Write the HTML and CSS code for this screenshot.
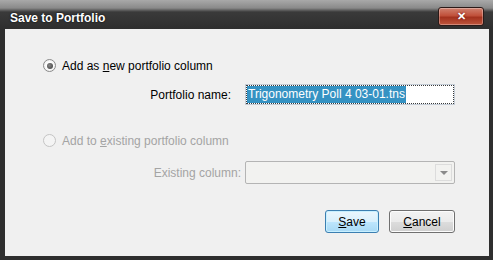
FILE: index.html
```html
<!DOCTYPE html>
<html lang="en">
<head>
    <meta charset="UTF-8">
    <title>Save to Portfolio</title>
    <link rel="stylesheet" href="styles.css">
</head>
<body>
    <div class="window">
        <div class="titlebar">
            <span class="title">Save to Portfolio</span>
            <button class="close">&#x2715;</button>
        </div>
        <div class="client">
            <div class="option">
                <span class="radio checked"></span>
                <span>Add as <u>n</u>ew portfolio column</span>
            </div>
            <div class="field">
                <label>Portfolio name:</label>
                <div class="textbox">
                    <div class="focus"><span class="selected">Trigonometry Poll 4 03-01.tns</span></div>
                </div>
            </div>
            <div class="option disabled">
                <span class="radio"></span>
                <span>Add to <u>e</u>xisting portfolio column</span>
            </div>
            <div class="field disabled">
                <label>Existing column:</label>
                <div class="combo"><span class="arrow"></span></div>
            </div>
            <div class="buttons">
                <button class="btn default"><u>S</u>ave</button>
                <button class="btn"><u>C</u>ancel</button>
            </div>
        </div>
    </div>
</body>
</html>
```

FILE: styles.css
```css
body {
    margin: 0;
    padding: 0;
    font-family: "Liberation Sans", Arial, sans-serif;
    font-size: 12px;
    background-color: #2b2b2b;
}

.window {
    width: 493px;
    height: 260px;
    display: flex;
    flex-direction: column;
    background: linear-gradient(to bottom, #a9a9a9 0px, #8a8a8a 8px, #3a3a3a 12px, #2e2e2e 29px);
    padding: 0 4px 4px 5px;
    box-sizing: border-box;
}

.titlebar {
    height: 29px;
    display: flex;
    align-items: flex-start;
    justify-content: space-between;
    flex-shrink: 0;
}

.title {
    color: #fff;
    font-weight: bold;
    font-size: 12px;
    margin: 11px 0 0 5px;
    text-shadow: 0 0 2px #000;
}

.close {
    width: 46px;
    height: 19px;
    margin-top: 7px;
    margin-right: 5px;
    border: 1px solid #2a1a18;
    border-radius: 3px;
    background: linear-gradient(to bottom, #d08270 0%, #c0503a 45%, #a3321e 55%, #bf563d 100%);
    color: #fff;
    font-weight: bold;
    font-size: 11px;
    line-height: 15px;
    padding: 0;
    box-shadow: inset 0 0 0 1px rgba(255, 255, 255, 0.3);
    text-shadow: 0 0 2px #600;
}

.client {
    flex: 1;
    background-color: #f0f0f0;
    display: flex;
    flex-direction: column;
    padding: 29px 0 0 38px;
    color: #000;
}

.option {
    display: flex;
    align-items: center;
    gap: 6px;
    height: 15px;
}

.option.disabled {
    color: #a4a4a4;
    margin-top: 28px;
}

.radio {
    width: 11px;
    height: 11px;
    border: 1px solid #8a8a8a;
    border-radius: 50%;
    background: radial-gradient(circle, #fff 40%, #e2e2e2 100%);
    display: flex;
    align-items: center;
    justify-content: center;
}

.radio.checked::after {
    content: "";
    width: 6px;
    height: 6px;
    border-radius: 50%;
    background: radial-gradient(circle at 40% 40%, #888, #3a3a3a);
}

.disabled .radio {
    border-color: #c4c4c4;
    background: #f4f4f4;
}

.field {
    display: flex;
    align-items: center;
    margin-top: 11px;
}

.field label {
    width: 202px;
    text-align: right;
    padding-right: 14px;
    box-sizing: border-box;
}

.field.disabled {
    margin-top: 13px;
    color: #a4a4a4;
}

.field.disabled label {
    padding-right: 4px;
}

.textbox {
    width: 210px;
    height: 21px;
    border: 1px solid #c3ccd6;
    box-sizing: border-box;
    background: #fff;
    display: flex;
}

.focus {
    flex: 1;
    border: 1px dotted #3a3a3a;
    display: flex;
}

.selected {
    background-color: #3592c3;
    color: #fff;
    font-size: 12px;
    line-height: 17px;
    padding: 0 1px;
}

.combo {
    width: 210px;
    height: 23px;
    border: 1px solid #b4b4b4;
    border-radius: 2px;
    box-sizing: border-box;
    background: #f2f2f0;
    display: flex;
    justify-content: flex-end;
    align-items: center;
    padding-right: 2px;
}

.arrow {
    width: 17px;
    height: 17px;
    border: 1px solid #dcdcdc;
    box-sizing: border-box;
    display: flex;
    align-items: center;
    justify-content: center;
}

.arrow::after {
    content: "";
    border-left: 4px solid transparent;
    border-right: 4px solid transparent;
    border-top: 4px solid #8a8a8a;
}

.buttons {
    display: flex;
    justify-content: flex-end;
    gap: 10px;
    margin-top: 26px;
    padding-right: 34px;
}

.btn {
    height: 23px;
    padding: 0;
    width: 66px;
    font-family: "Liberation Sans", Arial, sans-serif;
    font-size: 12px;
    color: #000;
    border: 1px solid #707070;
    border-radius: 3px;
    background: linear-gradient(to bottom, #f2f2f2 0%, #ebebeb 50%, #dddddd 51%, #cfcfcf 100%);
    box-shadow: inset 0 0 0 1px #fcfcfc;
}

.btn.default {
    width: 54px;
    border-color: #3c7fb1;
    background: linear-gradient(to bottom, #eaf6fd 0%, #d9f0fc 50%, #bee6fd 51%, #a7d9f5 100%);
    box-shadow: inset 0 0 0 1px #c8f0ff;
}
```
